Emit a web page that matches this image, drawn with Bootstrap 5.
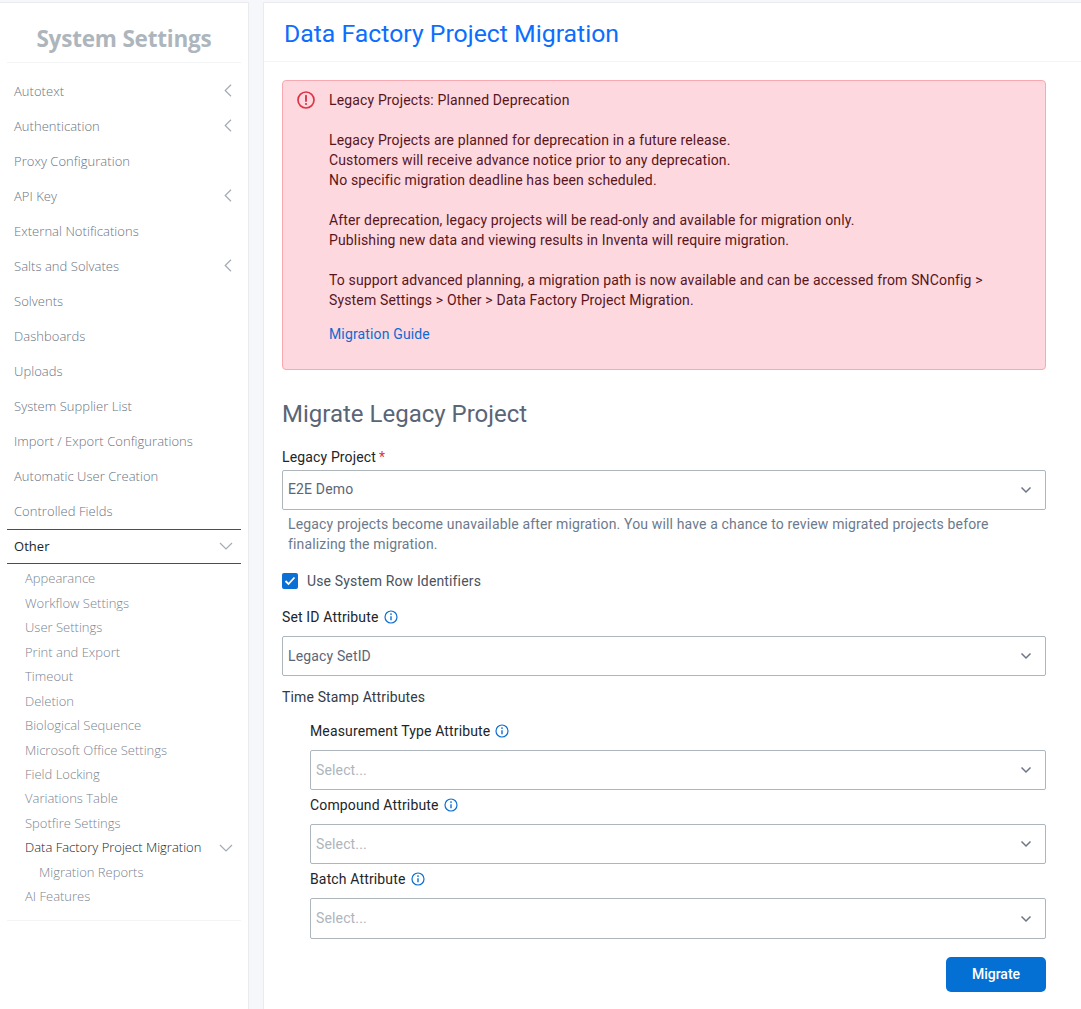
<!DOCTYPE html>
<html lang="en">
<head>
  <meta charset="UTF-8" />
  <meta name="viewport" content="width=device-width, initial-scale=1" />
  <title>Data Factory Project Migration</title>
  <link href="https://cdn.jsdelivr.net/npm/bootstrap@5.3.0/dist/css/bootstrap.min.css" rel="stylesheet" />
  <style>
    body { background: #f5f7fa; font-family: Roboto, sans-serif; font-size: 14px; height: 1009px; overflow: hidden; }
    .shell { padding-top: 2px; height: 1009px; }
    .side-panel { width: 249px; background: #fff; border-top: 1px solid #e9ebef; border-right: 1px solid #e9ebef; height: 1007px; padding: 0 7px; font-family: "Open Sans", sans-serif; font-weight: 300; flex: none; }
    .side-title { font-size: 22.5px; font-weight: 700; color: #adb5bd; text-align: center; height: 60px; line-height: 72px; border-bottom: 1px solid #f3f4f6; letter-spacing: -.2px; }
    .side-list { padding: 11px 0 11px; border-bottom: 1px solid #f3f4f6; }
    .side-item { height: 35px; display: flex; align-items: center; justify-content: space-between; padding: 0 8px 0 7px; font-size: 13px; letter-spacing: .04px; color: #697382; }
    .side-expanded { color: #212529; font-weight: 400; border-top: 1px solid #126e47; border-bottom: 1px solid #126e47; margin-bottom: 3px; }
    .side-item > svg.back { margin: -3px 1px 0 0; }
    .side-sub { height: 24.45px; display: flex; align-items: center; justify-content: space-between; padding: 0 8px 0 18px; font-size: 13px; color: #7b8491; }
    .side-sub.current { color: #212529; }
    .side-sub.deep { padding-left: 32px; }
    .main-panel { margin-left: 14px; flex: 1; background: #fff; height: 1007px; border-top: 1px solid #e9ebef; border-left: 1px solid #e9ebef; }
    .page-head { height: 59px; border-bottom: 1px solid #f3f4f6; padding-left: 20px; font-size: 24.8px; line-height: 62px; color: #0d6efd; }
    .page-body { padding: 18px 35px 0 18px; letter-spacing: .145px; }
    .notice { background: #fdd8df; border: 1px solid #f7a8b0; border-radius: 4px; height: 290px; padding: 9px 14px; color: #58151c; line-height: 20px; margin-bottom: 29px; display: flex; gap: 14px; }
    .notice svg { flex: none; margin-top: 1px; }
    .notice p { margin: 0 0 20px; }
    .notice a { color: #0d6bd0; text-decoration: none; display: block; margin-top: -6px; }
    .sub-title { font-size: 24px; color: #5a6575; font-weight: 400; line-height: 30px; margin: 0 0 18px; letter-spacing: 0; }
    .fld-label { color: #212529; line-height: 20px; margin-bottom: 3px; display: flex; align-items: center; gap: 5px; }
    .fld-label.set-id { margin-bottom: 9px; }
    .fld-label.ts-head { color: #343a44; margin: 11px 0 0; }
    .req { color: #dc3545; margin-left: -2px; }
    .pick { height: 40px; border: 1px solid #adb5bd; border-radius: 2px; display: flex; align-items: center; justify-content: space-between; padding: 0 13px 0 5px; color: #5c6675; }
    .pick.empty { color: #adb5bd; }
    .pick.tall { height: 41px; }
    .pick span { margin-top: -2px; }
    .hint { color: #6c7a8c; padding-left: 6px; line-height: 20px; margin-top: 4px; }
    .chk-row { display: flex; align-items: center; gap: 9px; margin: 17px 0 16px; line-height: 20px; color: #495260; }
    .chk-box { width: 16px; height: 16px; background: #0b6fd3; border-radius: 2px; display: flex; align-items: center; justify-content: center; }
    .ts-group { padding-left: 28px; margin-top: 14px; }
    .ts-group .fld-label { margin-bottom: 9px; }
    .ts-group .pick { margin-bottom: 5px; }
    .btn-row { margin-top: 18px; }
    .migrate-btn { background: #0470d4; color: #fff; border: 0; border-radius: 5px; width: 100px; height: 35px; font-size: 14px; font-weight: 500; padding: 0; }
  </style>
</head>
<body>
  <div class="shell d-flex">
    <div class="side-panel">
      <div class="side-title">System Settings</div>
      <div class="side-list" id="side-list"></div>
    </div>
    <div class="main-panel">
      <div class="page-head">Data Factory Project Migration</div>
      <div class="page-body">
        <div class="notice">
          <svg width="18" height="18" viewBox="0 0 18 18" fill="none"><circle cx="9" cy="9" r="8" stroke="#dc3545" stroke-width="1.7"/><path d="M9 4.6v5.4" stroke="#dc3545" stroke-width="1.9" stroke-linecap="round"/><circle cx="9" cy="13" r="1.1" fill="#dc3545"/></svg>
          <div>
            <p>Legacy Projects: Planned Deprecation</p>
            <p>Legacy Projects are planned for deprecation in a future release.<br>Customers will receive advance notice prior to any deprecation.<br>No specific migration deadline has been scheduled.</p>
            <p>After deprecation, legacy projects will be read-only and available for migration only.<br>Publishing new data and viewing results in Inventa will require migration.</p>
            <p>To support advanced planning, a migration path is now available and can be accessed from SNConfig &gt;<br>System Settings &gt; Other &gt; Data Factory Project Migration.</p>
            <a href="#">Migration Guide</a>
          </div>
        </div>

        <h2 class="sub-title">Migrate Legacy Project</h2>

        <div class="fld-label">Legacy Project <span class="req">*</span></div>
        <div class="pick"><span>E2E Demo</span> <svg width="12" height="8" viewBox="0 0 12 8" fill="none"><path d="M1.5 1.5 6 6l4.5-4.5" stroke="#6c7684" stroke-width="1.5"/></svg></div>
        <div class="hint">Legacy projects become unavailable after migration. You will have a chance to review migrated projects before finalizing the migration.</div>

        <div class="chk-row">
          <span class="chk-box"><svg width="12" height="10" viewBox="0 0 12 10" fill="none"><path d="M1.5 5 4.5 8l6-6.5" stroke="#fff" stroke-width="1.8"/></svg></span>
          Use System Row Identifiers
        </div>

        <div class="fld-label set-id">Set ID Attribute <svg width="14" height="14" viewBox="0 0 14 14" fill="none"><circle cx="7" cy="7" r="6" stroke="#0b6fd3" stroke-width="1.2"/><path d="M7 6.2v4" stroke="#0b6fd3" stroke-width="1.4"/><circle cx="7" cy="4.1" r=".9" fill="#0b6fd3"/></svg></div>
        <div class="pick">Legacy SetID <svg width="12" height="8" viewBox="0 0 12 8" fill="none"><path d="M1.5 1.5 6 6l4.5-4.5" stroke="#6c7684" stroke-width="1.5"/></svg></div>

        <div class="fld-label ts-head">Time Stamp Attributes</div>
        <div class="ts-group">
          <div class="fld-label">Measurement Type Attribute <svg width="14" height="14" viewBox="0 0 14 14" fill="none"><circle cx="7" cy="7" r="6" stroke="#0b6fd3" stroke-width="1.2"/><path d="M7 6.2v4" stroke="#0b6fd3" stroke-width="1.4"/><circle cx="7" cy="4.1" r=".9" fill="#0b6fd3"/></svg></div>
          <div class="pick empty">Select... <svg width="12" height="8" viewBox="0 0 12 8" fill="none"><path d="M1.5 1.5 6 6l4.5-4.5" stroke="#6c7684" stroke-width="1.5"/></svg></div>
          <div class="fld-label">Compound Attribute <svg width="14" height="14" viewBox="0 0 14 14" fill="none"><circle cx="7" cy="7" r="6" stroke="#0b6fd3" stroke-width="1.2"/><path d="M7 6.2v4" stroke="#0b6fd3" stroke-width="1.4"/><circle cx="7" cy="4.1" r=".9" fill="#0b6fd3"/></svg></div>
          <div class="pick empty">Select... <svg width="12" height="8" viewBox="0 0 12 8" fill="none"><path d="M1.5 1.5 6 6l4.5-4.5" stroke="#6c7684" stroke-width="1.5"/></svg></div>
          <div class="fld-label">Batch Attribute <svg width="14" height="14" viewBox="0 0 14 14" fill="none"><circle cx="7" cy="7" r="6" stroke="#0b6fd3" stroke-width="1.2"/><path d="M7 6.2v4" stroke="#0b6fd3" stroke-width="1.4"/><circle cx="7" cy="4.1" r=".9" fill="#0b6fd3"/></svg></div>
          <div class="pick empty tall">Select... <svg width="12" height="8" viewBox="0 0 12 8" fill="none"><path d="M1.5 1.5 6 6l4.5-4.5" stroke="#6c7684" stroke-width="1.5"/></svg></div>
        </div>
        <div class="d-flex justify-content-end btn-row"><button class="migrate-btn">Migrate</button></div>
      </div>
    </div>
  </div>

  <script>
    const left = '<svg class="back" width="8" height="13" viewBox="0 0 8 13" fill="none"><path d="M7 .8 1.2 6.5 7 12.2" stroke="#a3abb5" stroke-width="1.2"/></svg>';
    const down = '<svg width="14" height="9" viewBox="0 0 14 9" fill="none"><path d="M1 1l6 6 6-6" stroke="#a3abb5" stroke-width="1.2"/></svg>';
    const top_items = [["Autotext", 1], ["Authentication", 1], ["Proxy Configuration"], ["API Key", 1], ["External Notifications"], ["Salts and Solvates", 1], ["Solvents"], ["Dashboards"], ["Uploads"], ["System Supplier List"], ["Import / Export Configurations"], ["Automatic User Creation"], ["Controlled Fields"]];
    const subs = ["Appearance", "Workflow Settings", "User Settings", "Print and Export", "Timeout", "Deletion", "Biological Sequence", "Microsoft Office Settings", "Field Locking", "Variations Table", "Spotfire Settings"];
    let html = "";
    top_items.forEach(i => { html += `<div class="side-item"><span>${i[0]}</span>${i[1] ? left : ""}</div>`; });
    html += `<div class="side-item side-expanded"><span>Other</span>${down}</div>`;
    subs.forEach(s => { html += `<div class="side-sub"><span>${s}</span></div>`; });
    html += `<div class="side-sub current"><span>Data Factory Project Migration</span>${down}</div>`;
    html += `<div class="side-sub deep"><span>Migration Reports</span></div>`;
    html += `<div class="side-sub"><span>AI Features</span></div>`;
    document.getElementById("side-list").innerHTML = html;
  </script>
  <script src="https://cdn.jsdelivr.net/npm/bootstrap@5.3.0/dist/js/bootstrap.bundle.min.js"></script>
</body>
</html>
